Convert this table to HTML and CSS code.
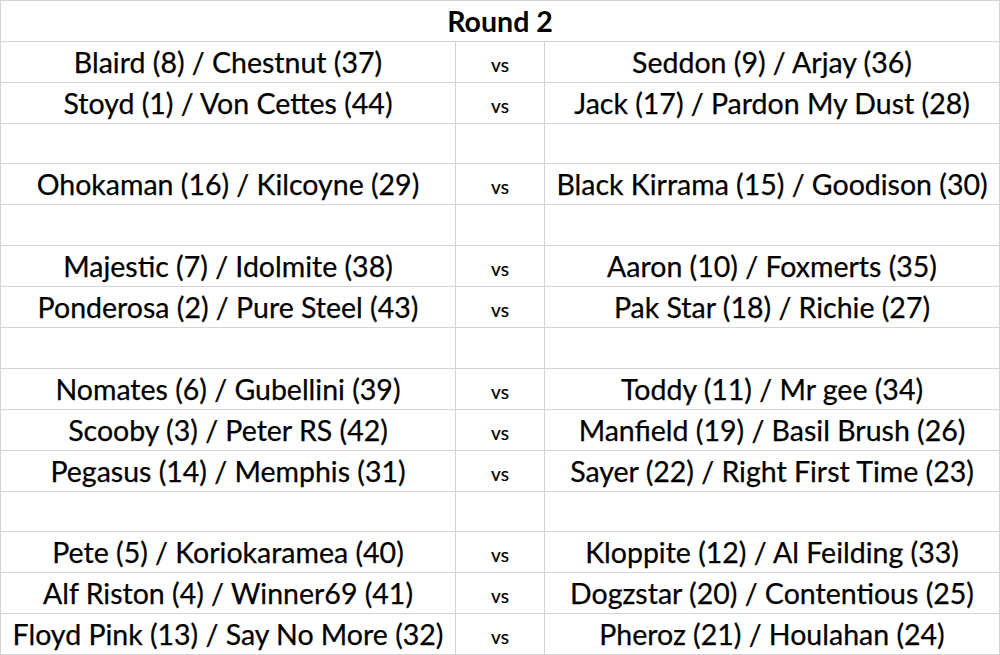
FILE: index.html
```html
<!DOCTYPE html>
<html>
<head>
<meta charset="utf-8">
<link rel="stylesheet" href="styles.css">
</head>
<body>
<div class="sheet">
  <div class="cell title">Round 2</div>

  <div class="cell team">Blaird (8) / Chestnut (37)</div>
  <div class="cell vs">vs</div>
  <div class="cell team">Seddon (9) / Arjay (36)</div>

  <div class="cell team">Stoyd (1) / Von Cettes (44)</div>
  <div class="cell vs">vs</div>
  <div class="cell team">Jack (17) / Pardon My Dust (28)</div>

  <div class="cell"></div><div class="cell"></div><div class="cell"></div>

  <div class="cell team">Ohokaman (16) / Kilcoyne (29)</div>
  <div class="cell vs">vs</div>
  <div class="cell team">Black Kirrama (15) / Goodison (30)</div>

  <div class="cell"></div><div class="cell"></div><div class="cell"></div>

  <div class="cell team">Majestic (7) / Idolmite (38)</div>
  <div class="cell vs">vs</div>
  <div class="cell team">Aaron (10) / Foxmerts (35)</div>

  <div class="cell team">Ponderosa (2) / Pure Steel (43)</div>
  <div class="cell vs">vs</div>
  <div class="cell team">Pak Star (18) / Richie (27)</div>

  <div class="cell"></div><div class="cell"></div><div class="cell"></div>

  <div class="cell team">Nomates (6) / Gubellini (39)</div>
  <div class="cell vs">vs</div>
  <div class="cell team">Toddy (11) / Mr gee (34)</div>

  <div class="cell team">Scooby (3) / Peter RS (42)</div>
  <div class="cell vs">vs</div>
  <div class="cell team">Manfield (19) / Basil Brush (26)</div>

  <div class="cell team">Pegasus (14) / Memphis (31)</div>
  <div class="cell vs">vs</div>
  <div class="cell team">Sayer (22) / Right First Time (23)</div>

  <div class="cell"></div><div class="cell"></div><div class="cell"></div>

  <div class="cell team">Pete (5) / Koriokaramea (40)</div>
  <div class="cell vs">vs</div>
  <div class="cell team">Kloppite (12) / Al Feilding (33)</div>

  <div class="cell team">Alf Riston (4) / Winner69 (41)</div>
  <div class="cell vs">vs</div>
  <div class="cell team">Dogzstar (20) / Contentious (25)</div>

  <div class="cell team">Floyd Pink (13) / Say No More (32)</div>
  <div class="cell vs">vs</div>
  <div class="cell team">Pheroz (21) / Houlahan (24)</div>
</div>
</body>
</html>
```

FILE: styles.css
```css
html, body {
  margin: 0;
  padding: 0;
  background: #ffffff;
}

.sheet {
  width: 1000px;
  height: 655px;
  box-sizing: border-box;
  display: grid;
  grid-template-columns: 454px 88px 454px;
  grid-template-rows: 40px 40px 40px 39px 40px 40px 40px 40px 40px 40px 40px 40px 39px 40px 40px 40px;
  gap: 1px;
  padding: 1px;
  background: #d4d4d4;
  font-family: "Lato", "Liberation Sans", sans-serif;
  color: #000000;
}

.cell {
  background: #ffffff;
  display: flex;
  align-items: flex-end;
  justify-content: center;
  white-space: nowrap;
  overflow: hidden;
}

.title {
  grid-column: 1 / 4;
  font-weight: bold;
  font-size: 28.5px;
  line-height: 28.5px;
  padding-bottom: 6px;
}

.team {
  font-size: 28.5px;
  line-height: 28.5px;
  padding-bottom: 6px;
  -webkit-text-stroke: 0.25px #000000;
}

.vs {
  font-size: 19px;
  line-height: 19px;
  padding-bottom: 8px;
  -webkit-text-stroke: 0.2px #000000;
}
```
